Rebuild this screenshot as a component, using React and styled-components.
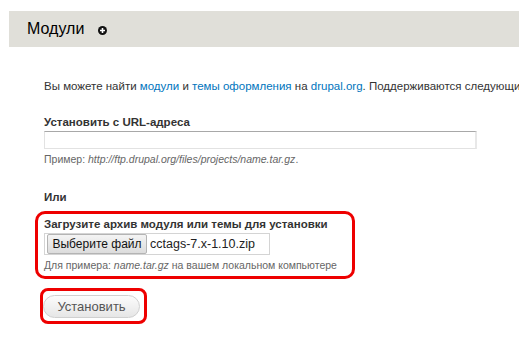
import React from "react"
import styled, { createGlobalStyle } from "styled-components"

const GlobalStyle = createGlobalStyle`
  body {
    margin: 0;
    background: #fff;
    font-family: "Liberation Sans", Arial, sans-serif;
    color: #333;
  }
`

const Page = styled.div`
  width: 528px;
  height: 349px;
  overflow: hidden;
  padding-top: 11px;
  box-sizing: border-box;
`

const Header = styled.div`
  margin: 0 9px;
  height: 36px;
  background: #e0dfd9;
  display: flex;
  align-items: center;
  padding-left: 18px;
  gap: 14px;
`

const Title = styled.h1`
  margin: 0;
  font-size: 16px;
  font-weight: normal;
  color: #000;
  line-height: 20px;
`

const AddIcon = styled.span`
  width: 9px;
  height: 9px;
  display: inline-flex;
  margin-top: 2px;
`

const Content = styled.div`
  padding-left: 44px;
  padding-top: 30px;
`

const Intro = styled.p`
  margin: 0;
  width: 475px;
  overflow: hidden;
  font-size: 11.5px;
  line-height: 18px;
  white-space: nowrap;
`

const Link = styled.a`
  color: #0074bd;
  text-decoration: none;
`

const Field = styled.div`
  margin-top: ${(p) => p.$top || 0}px;
`

const Label = styled.div`
  font-size: 11.5px;
  font-weight: bold;
  line-height: 16px;
  color: #333;
`

const TextInput = styled.div`
  width: 433px;
  height: 18px;
  box-sizing: border-box;
  border: 1px solid #e2e2e2;
  border-top-color: #a8a8a8;
  border-right: 2px solid #e8e8e8;
  margin-top: 1px;
  background: #fff;
`

const Hint = styled.div`
  font-size: 10.5px;
  line-height: 14px;
  color: #666;
  margin-top: 3px;
  white-space: nowrap;

  em {
    font-style: italic;
  }
`

const Marked = styled.div`
  border: 3px solid #ee0000;
  border-radius: ${(p) => p.$radius}px;
  box-sizing: border-box;
  width: ${(p) => p.$width}px;
  margin-left: ${(p) => p.$shift}px;
  margin-top: ${(p) => p.$top}px;
  padding: ${(p) => p.$pad};
`

const FileBox = styled.div`
  display: flex;
  align-items: center;
  width: 226px;
  height: 22px;
  box-sizing: border-box;
  border: 1px solid #d4d4d4;
  padding-left: 2px;
  margin-top: 1px;
  gap: 3px;
`

const FileButton = styled.span`
  height: 20px;
  width: 100px;
  box-sizing: border-box;
  display: inline-flex;
  align-items: center;
  justify-content: center;
  font-size: 12px;
  color: #111;
  background: linear-gradient(#f4f4f4, #dcdcdc);
  border: 1px solid #b4b4b4;
  border-radius: 2px;
`

const FileName = styled.span`
  font-size: 12.5px;
  color: #222;
`

const Button = styled.button`
  font-family: inherit;
  font-size: 13px;
  color: #555;
  width: 97px;
  height: 23px;
  border: 1px solid #d0d0d0;
  border-radius: 12px;
  background: linear-gradient(#fcfcfc, #e6e6e6);
  padding: 0;
  display: block;
`

export default function App() {
  return (
    <Page>
      <GlobalStyle />
      <Header>
        <Title>Модули</Title>
        <AddIcon>
          <svg width="9" height="9" viewBox="0 0 9 9">
            <circle cx="4.5" cy="4.5" r="4.5" fill="#111" />
            <path d="M4.5 2v5M2 4.5h5" stroke="#fff" strokeWidth="1.6" />
          </svg>
        </AddIcon>
      </Header>
      <Content>
        <Intro>
          Вы можете найти <Link href="#">модули</Link> и <Link href="#">темы оформления</Link> на{" "}
          <Link href="#">drupal.org</Link>. Поддерживаются следующие типы файлов: tar tgz gz bz2 zip.
        </Intro>
        <Field $top={19}>
          <Label>Установить с URL-адреса</Label>
          <TextInput />
          <Hint>
            Пример: <em>http://ftp.drupal.org/files/projects/name.tar.gz</em>.
          </Hint>
        </Field>
        <Field $top={23}>
          <Label>Или</Label>
        </Field>
        <Marked $width={320} $shift={-9} $top={6} $radius={10} $pad="2px 0 4px 6px">
          <Label>Загрузите архив модуля или темы для установки</Label>
          <FileBox>
            <FileButton>Выберите файл</FileButton>
            <FileName>cctags-7.x-1.10.zip</FileName>
          </FileBox>
          <Hint>
            Для примера: <em>name.tar.gz</em> на вашем локальном компьютере
          </Hint>
        </Marked>
        <Marked $width={107} $shift={-4} $top={9} $radius={8} $pad="4px 3px 3px 0px">
          <Button>Установить</Button>
        </Marked>
      </Content>
    </Page>
  )
}
